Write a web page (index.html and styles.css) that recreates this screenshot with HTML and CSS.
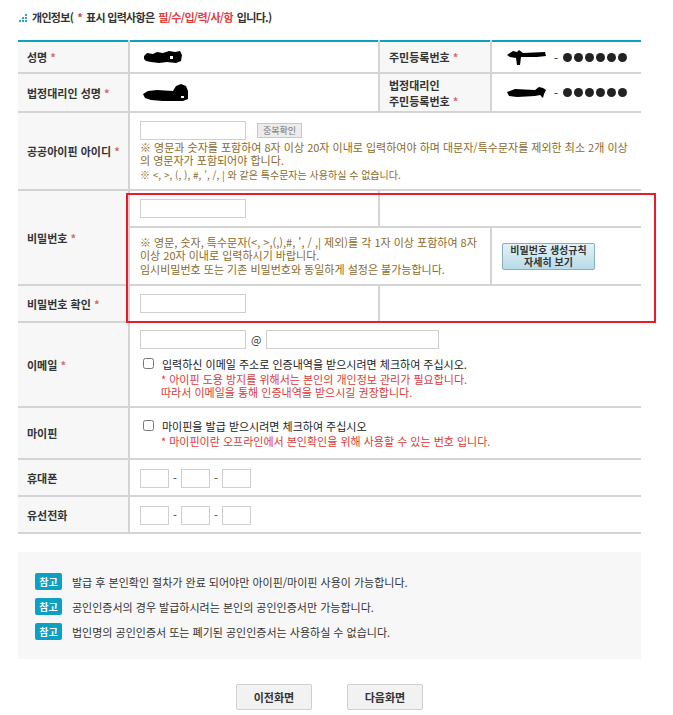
FILE: index.html
```html
<!DOCTYPE html>
<html lang="ko">
<head>
<meta charset="utf-8">
<title>개인정보 입력</title>
<link rel="stylesheet" href="styles.css">
</head>
<body>
<div class="page">
    <h2 class="title">
        <svg class="title-icon" width="9" height="8" viewBox="0 0 9 8">
            <rect x="0" y="6" width="2" height="2" fill="#2aa6c8"/>
            <rect x="3" y="3" width="2" height="2" fill="#2aa6c8"/>
            <rect x="3" y="6" width="2" height="2" fill="#2aa6c8"/>
            <rect x="6" y="0" width="2" height="2" fill="#2aa6c8"/>
            <rect x="6" y="3" width="2" height="2" fill="#2aa6c8"/>
            <rect x="6" y="6" width="2" height="2" fill="#2aa6c8"/>
        </svg>
        개인정보( <span class="star">*</span> 표시 입력사항은 <span class="req">필/수/입/력/사/항</span> 입니다.)
    </h2>

    <table class="form">
        <colgroup>
            <col class="c-label">
            <col class="c-value">
            <col class="c-label2">
            <col class="c-value2">
        </colgroup>
        <tr class="r-name">
            <th>성명 <span class="star">*</span></th>
            <td>
                <svg class="blot" width="40" height="14" viewBox="0 0 40 14">
                    <path d="M1 6 L4 3 L10 4 L14 2 L20 3 L26 1 L32 2 L37 1 L39 5 L38 11 L33 13 L24 12 L16 13 L8 12 L3 11 L1 9 Z" fill="#000"/>
                    <path d="M27 6 h3 v3 h-3z" fill="#fff"/>
                </svg>
            </td>
            <th class="th2">주민등록번호 <span class="star">*</span></th>
            <td>
                <div class="jumin">
                    <svg class="blot" width="40" height="18" viewBox="0 0 40 18">
                        <path d="M0 7 L6 3 L10 4 L12 2 L16 5 L38 4 L39 8 L30 9 L14 9 L13 17 L10 17 L9 10 L3 9 Z" fill="#000"/>
                    </svg>
                    <span class="dash">-</span>
                    <span class="dots"><i></i><i></i><i></i><i></i><i></i><i></i></span>
                </div>
            </td>
        </tr>
        <tr class="r-agent">
            <th>법정대리인 성명 <span class="star">*</span></th>
            <td>
                <svg class="blot" width="46" height="18" viewBox="0 0 46 18">
                    <path d="M0 10 L5 7 L14 6 L30 7 L33 2 L38 0 L43 2 L45 7 L45 15 L40 17 L20 17 L8 16 L2 14 Z" fill="#000"/>
                    <path d="M38 12 h3 v2 h-3z" fill="#fff"/>
                </svg>
            </td>
            <th class="th2">법정대리인<br>주민등록번호 <span class="star">*</span></th>
            <td>
                <div class="jumin">
                    <svg class="blot" width="40" height="14" viewBox="0 0 40 14">
                        <path d="M0 6 L8 3 L28 4 L32 1 L36 2 L39 4 L37 8 L36 12 L33 9 L28 10 L10 11 L2 10 Z" fill="#000"/>
                    </svg>
                    <span class="dash">-</span>
                    <span class="dots"><i></i><i></i><i></i><i></i><i></i><i></i></span>
                </div>
            </td>
        </tr>
        <tr class="r-id">
            <th>공공아이핀 아이디 <span class="star">*</span></th>
            <td colspan="3">
                <div class="line">
                    <input type="text" class="field">
                    <button class="btn-check">중복확인</button>
                </div>
                <p class="help">※ 영문과 숫자를 포함하여 8자 이상 20자 이내로 입력하여야 하며 대문자/특수문자를 제외한 최소 2개 이상<br>의 영문자가 포함되어야 합니다.</p>
                <p class="help small">※ &lt;, &gt;, (, ), #, ', /, | 와 같은 특수문자는 사용하실 수 없습니다.</p>
            </td>
        </tr>
        <tr class="r-pw">
            <th rowspan="2">비밀번호 <span class="star">*</span></th>
            <td><input type="password" class="field"></td>
            <td colspan="2"></td>
        </tr>
        <tr class="r-pwhelp">
            <td colspan="2">
                <p class="help">※ 영문, 숫자, 특수문자(&lt;, &gt;,(,),#, ', / ,| 제외)를 각 1자 이상 포함하여 8자<br>이상 20자 이내로 입력하시기 바랍니다.<br>임시비밀번호 또는 기존 비밀번호와 동일하게 설정은 불가능합니다.</p>
            </td>
            <td class="center">
                <button class="btn-rule">비밀번호 생성규칙<br>자세히 보기</button>
            </td>
        </tr>
        <tr class="r-pw">
            <th>비밀번호 확인 <span class="star">*</span></th>
            <td><input type="password" class="field"></td>
            <td colspan="2"></td>
        </tr>
        <tr class="r-email">
            <th>이메일 <span class="star">*</span></th>
            <td colspan="3">
                <div class="line">
                    <input type="text" class="field">
                    <span class="at">@</span>
                    <input type="text" class="field wide">
                </div>
                <label class="check"><input type="checkbox"> 입력하신 이메일 주소로 인증내역을 받으시려면 체크하여 주십시오.</label>
                <p class="warn">* 아이핀 도용 방지를 위해서는 본인의 개인정보 관리가 필요합니다.<br>따라서 이메일을 통해 인증내역을 받으시길 권장합니다.</p>
            </td>
        </tr>
        <tr class="r-mypin">
            <th>마이핀</th>
            <td colspan="3">
                <label class="check"><input type="checkbox"> 마이핀을 발급 받으시려면 체크하여 주십시오</label>
                <p class="warn">* 마이핀이란 오프라인에서 본인확인을 위해 사용할 수 있는 번호 입니다.</p>
            </td>
        </tr>
        <tr class="r-phone">
            <th>휴대폰</th>
            <td colspan="3">
                <input type="text" class="field short"><span class="sep">-</span><input type="text" class="field short"><span class="sep">-</span><input type="text" class="field short">
            </td>
        </tr>
        <tr class="r-phone">
            <th>유선전화</th>
            <td colspan="3">
                <input type="text" class="field short"><span class="sep">-</span><input type="text" class="field short"><span class="sep">-</span><input type="text" class="field short">
            </td>
        </tr>
    </table>

    <div class="notice">
        <p><span class="badge">참고</span>발급 후 본인확인 절차가 완료 되어야만 아이핀/마이핀 사용이 가능합니다.</p>
        <p><span class="badge">참고</span>공인인증서의 경우 발급하시려는 본인의 공인인증서만 가능합니다.</p>
        <p><span class="badge">참고</span>법인명의 공인인증서 또는 폐기된 공인인증서는 사용하실 수 없습니다.</p>
    </div>

    <div class="buttons">
        <button class="btn">이전화면</button>
        <button class="btn">다음화면</button>
    </div>

    <div class="highlight"></div>
</div>
</body>
</html>
```

FILE: styles.css
```css
body{
    margin: 0;
    font-family: "Noto Sans CJK KR", "Noto Sans", sans-serif;
    font-size: 12px;
    color: #333;
    background: #fff;
}
.page{
    position: relative;
    width: 673px;
    padding-bottom: 5px;
}
.title{
    margin: 0;
    padding: 8px 0 0 19px;
    height: 40px;
    box-sizing: border-box;
    font-size: 11px;
    font-weight: bold;
    letter-spacing: -0.7px;
    line-height: 18px;
    color: #333;
    display: flex;
    align-items: flex-start;
    gap: 4px;
}
.title-icon{
    margin-top: 6px;
}
.star{
    color: #e0403f;
    font-weight: bold;
}
th .star{
    color: #d46a6a;
}
.req{
    color: #e0403f;
}

/* form table */
.form{
    margin-left: 18px;
    width: 623px;
    border-collapse: collapse;
    table-layout: fixed;
    border-top: 2px solid #0ba1c5;
}
.c-label{ width: 111px; }
.c-value{ width: 250px; }
.c-label2{ width: 112px; }
.c-value2{ width: 150px; }
.form th,
.form td{
    border-bottom: 2px solid #d4d4d4;
    padding: 0 0 0 10px;
    vertical-align: middle;
}
.form th{
    background: #f7f7f7;
    text-align: left;
    font-size: 11px;
    font-weight: bold;
    color: #333;
    padding-left: 9px;
    border-right: 2px solid #d4d4d4;
    line-height: 16px;
    white-space: nowrap;
}
.form .th2{
    border-left: 2px solid #d4d4d4;
}
.form td + td{
    border-left: 2px solid #d4d4d4;
}
.r-name{ height: 32px; }
.r-agent{ height: 39px; }
.r-id{ height: 78px; }
.r-pw{ height: 37px; }
.r-pwhelp{ height: 58px; }
.r-email{ height: 85px; }
.r-mypin{ height: 52px; }
.r-phone{ height: 37px; }

.blot{
    display: block;
    margin-left: 3px;
}
.jumin{
    display: flex;
    align-items: center;
    padding-left: 2px;
}
.jumin .dash{
    margin: 0 5px 0 7px;
}
.dots{
    display: flex;
    gap: 2px;
}
.dots i{
    width: 9px;
    height: 9px;
    border-radius: 50%;
    background: #222;
}

.line{
    display: flex;
    align-items: center;
}
.field{
    box-sizing: border-box;
    width: 106px;
    height: 19px;
    border: 1px solid #cfcfcf;
    padding: 0 3px;
    margin: 0;
    font-size: 11px;
    background: #fff;
}
.field.wide{
    width: 173px;
}
.field.short{
    width: 29px;
}
.sep{
    display: inline-block;
    width: 12px;
    text-align: center;
    font-size: 11px;
    vertical-align: middle;
}
.r-phone .field{
    vertical-align: middle;
}
.at{
    margin: 0 5px;
    font-size: 11px;
}
.btn-check{
    margin-left: 11px;
    height: 15px;
    padding: 0 5px;
    border: 1px solid #c8c8c8;
    background: #ececec;
    color: #777;
    font-family: inherit;
    font-size: 9px;
    line-height: 13px;
}
.help{
    margin: 0;
    font-size: 11px;
    line-height: 13.5px;
    color: #8a6a2a;
}
.r-id .line{
    margin-bottom: 1px;
}
.help.small{
    font-size: 10px;
}
.center{
    padding-left: 9px;
}
.btn-rule{
    width: 93px;
    height: 27px;
    padding: 0;
    border: 1px solid #86afc0;
    border-radius: 2px;
    background: linear-gradient(#e2f2f8, #b8dbe8);
    font-family: inherit;
    font-size: 10px;
    font-weight: bold;
    line-height: 12.5px;
    color: #333;
}
.check{
    display: flex;
    align-items: center;
    margin-top: 7px;
    font-size: 11px;
    color: #222;
}
.check input{
    width: 11px;
    height: 11px;
    margin: 0 8px 0 3px;
}
.warn{
    margin: 1px 0 0 21px;
    font-size: 11px;
    line-height: 13.5px;
    color: #d93a3a;
}
.r-mypin .check{
    margin-top: 0;
}

/* notice */
.notice{
    margin: 18px 0 0 18px;
    width: 623px;
    box-sizing: border-box;
    height: 107px;
    background: #f7f7f7;
    padding: 21px 17px;
}
.notice p{
    margin: 0 0 8px;
    display: flex;
    align-items: center;
    font-size: 11px;
    color: #333;
}
.badge{
    display: inline-block;
    width: 27px;
    height: 17px;
    line-height: 17px;
    border-radius: 2px;
    background: #0da0c2;
    color: #fff;
    font-weight: bold;
    font-size: 10px;
    text-align: center;
    margin-right: 10px;
}

/* bottom buttons */
.buttons{
    margin: 25px 0 0 18px;
    width: 623px;
    display: flex;
    justify-content: center;
    gap: 35px;
}
.btn{
    width: 76px;
    height: 26px;
    border: 1px solid #cfcfcf;
    border-radius: 2px;
    background: #f2f2f2;
    font-family: inherit;
    font-size: 11px;
    font-weight: bold;
    color: #333;
}

/* red annotation frame over the password rows */
.highlight{
    position: absolute;
    left: 126px;
    top: 193px;
    width: 530px;
    height: 130px;
    box-sizing: border-box;
    border: 2px solid #e81c2a;
    pointer-events: none;
}
```
